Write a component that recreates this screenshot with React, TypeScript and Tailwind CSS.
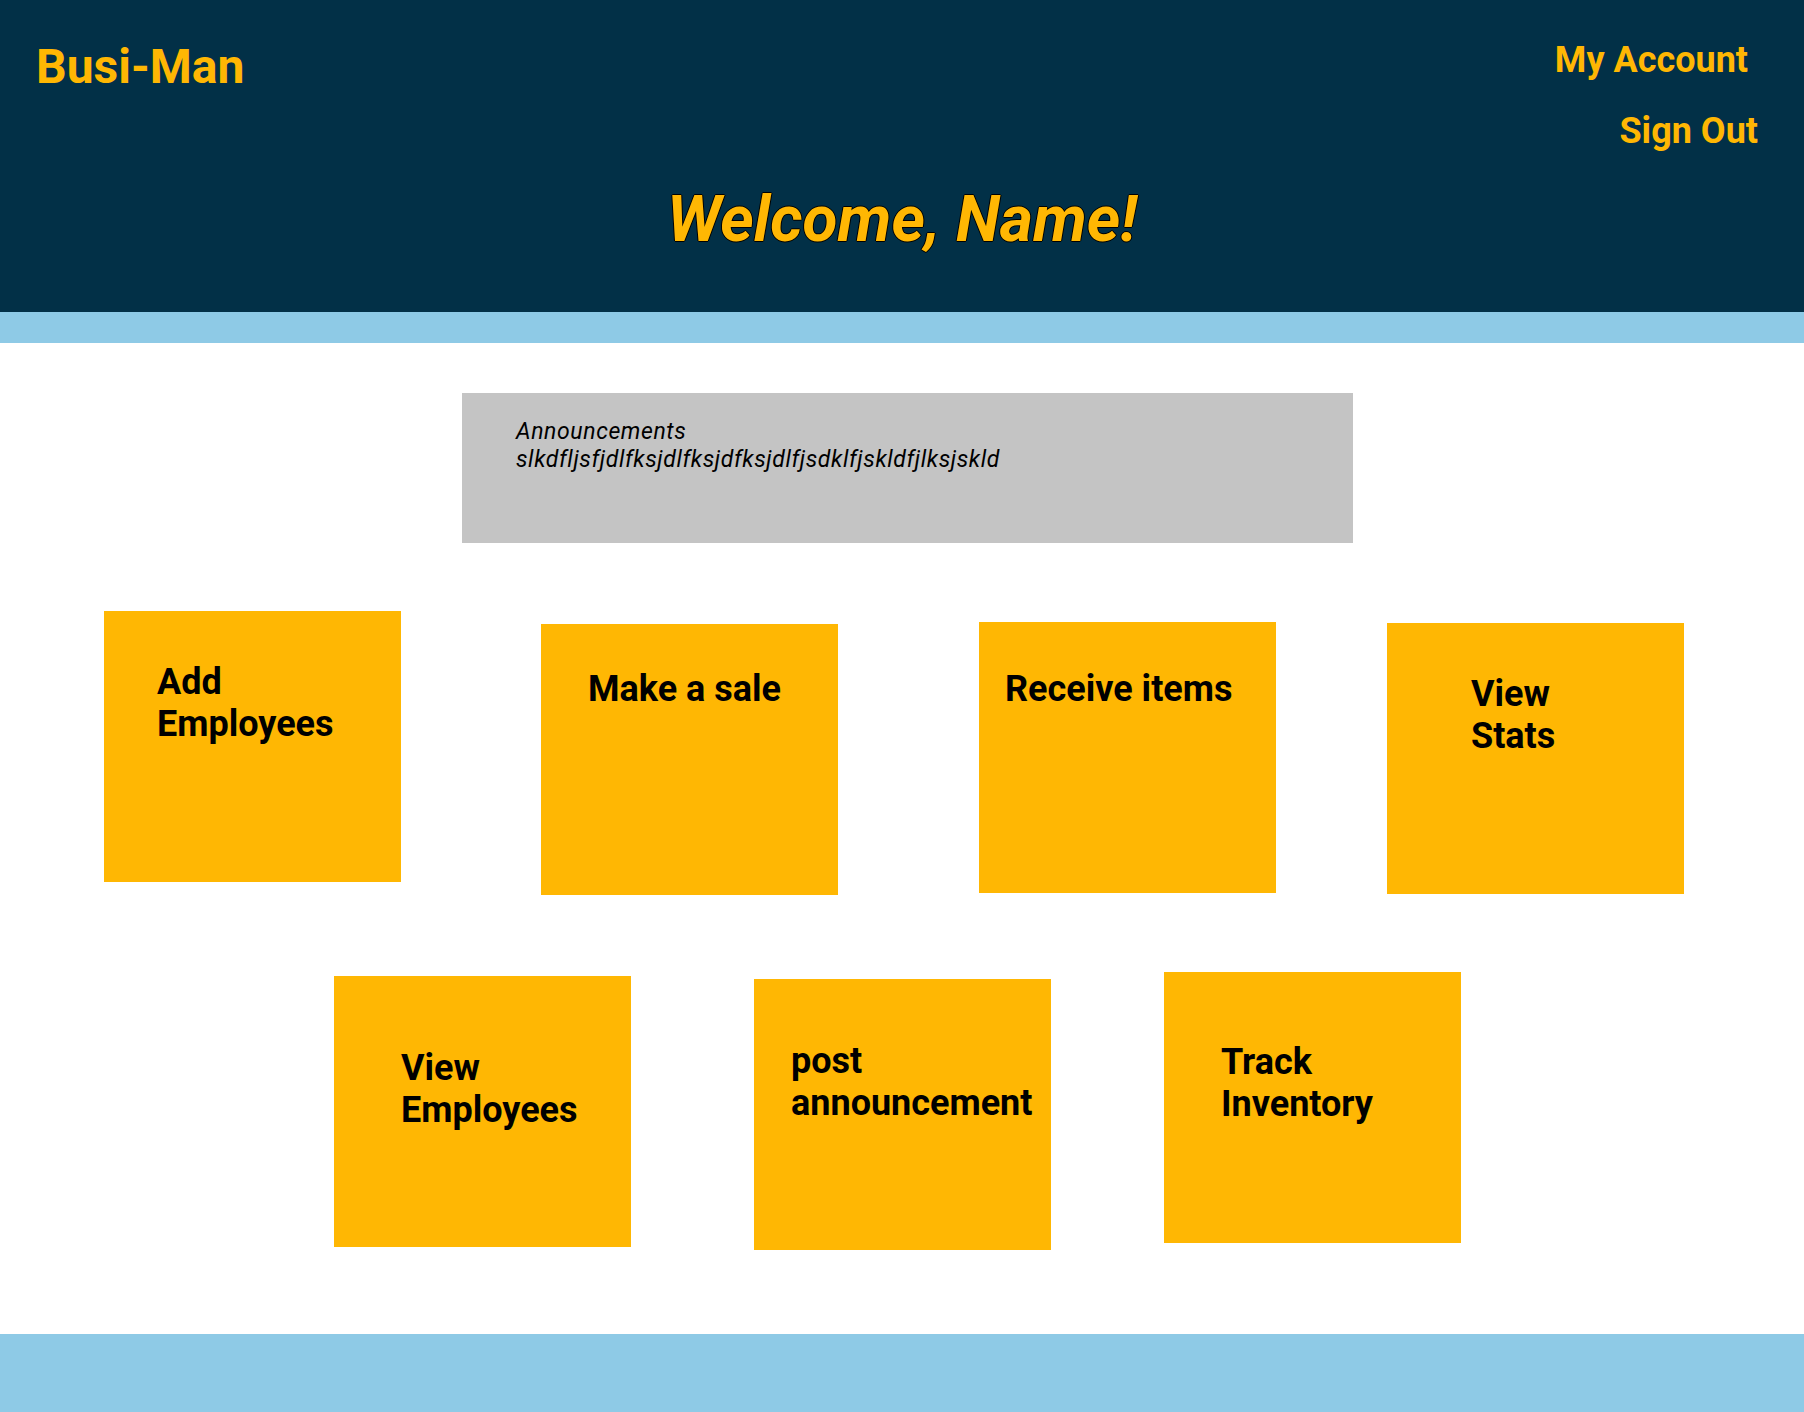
const rowOne = [
  { label: ["Add", "Employees"], box: "ml-[104px] mt-0", text: "pl-[53px] pt-[50px]" },
  { label: ["Make a sale"], box: "ml-[140px] mt-[13px]", text: "pl-[47px] pt-[44px]" },
  { label: ["Receive items"], box: "ml-[141px] mt-[11px]", text: "pl-[26px] pt-[46px]" },
  { label: ["View", "Stats"], box: "ml-[111px] mt-[12px]", text: "pl-[84px] pt-[50px]" },
];

const rowTwo = [
  { label: ["View", "Employees"], box: "ml-[334px] mt-[4px]", text: "pl-[67px] pt-[71px]" },
  { label: ["post", "announcement"], box: "ml-[123px] mt-[7px]", text: "pl-[37px] pt-[61px]" },
  { label: ["Track", "Inventory"], box: "ml-[113px] mt-0", text: "pl-[57px] pt-[69px]" },
];

type Tile = { label: string[]; box: string; text: string };

function ActionCard({ tile }: { tile: Tile }) {
  return (
    <button
      className={`${tile.box} ${tile.text} w-[297px] h-[271px] shrink-0 bg-[#FFB703] text-left flex flex-col items-start`}
    >
      {tile.label.map((line) => (
        <span key={line} className="block text-[36px] leading-[42px] font-bold text-black whitespace-nowrap">
          {line}
        </span>
      ))}
    </button>
  );
}

export default function App() {
  return (
    <div className="min-h-screen flex flex-col bg-white font-['Roboto',sans-serif]">
      {/* Header */}
      <header className="h-[312px] bg-[#023047] flex flex-col pt-[39px]">
        <div className="flex justify-between items-start">
          <a href="#" className="ml-[36px] text-[48px] leading-[56px] font-bold text-[#FFB703]">
            Busi-Man
          </a>
          <nav className="flex flex-col items-end">
            <a href="#" className="mr-[56px] text-[36px] leading-[42px] font-bold text-[#FFB703]">
              My Account
            </a>
            <a href="#" className="mr-[46px] mt-[29px] text-[36px] leading-[42px] font-bold text-[#FFB703]">
              Sign Out
            </a>
          </nav>
        </div>
        <h1 className="mt-[30px] text-center text-[64px] leading-[75px] font-bold italic text-[#FFB703] [text-shadow:1px_0_0_#000,-1px_0_0_#000,0_1px_0_#000,0_-1px_0_#000]">
          Welcome, Name!
        </h1>
      </header>
      <div className="h-[31px] bg-[#8ECAE6]" />

      {/* Main */}
      <main className="flex-1 flex flex-col">
        <section className="ml-[462px] mt-[50px] w-[891px] h-[150px] bg-[#C4C4C4] pl-[54px] pt-[25px]">
          <p className="text-[23px] leading-[28px] tracking-[0.6px] italic text-black">Announcements</p>
          <p className="text-[23px] leading-[28px] tracking-[0.6px] italic text-black">
            slkdfljsfjdlfksjdlfksjdfksjdlfjsdklfjskldfjlksjskld
          </p>
        </section>

        <div className="flex items-start mt-[68px]">
          {rowOne.map((tile) => (
            <ActionCard key={tile.label.join(" ")} tile={tile} />
          ))}
        </div>

        <div className="flex items-start mt-[77px]">
          {rowTwo.map((tile) => (
            <ActionCard key={tile.label.join(" ")} tile={tile} />
          ))}
        </div>
      </main>

      {/* Footer */}
      <footer className="h-[78px] bg-[#8ECAE6]" />
    </div>
  );
}
